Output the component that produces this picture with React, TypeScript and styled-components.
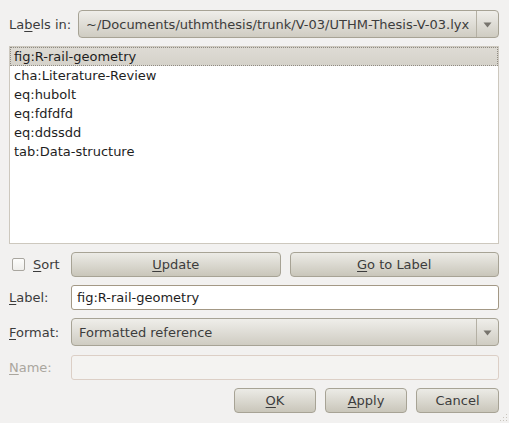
import React from "react";
import styled, { createGlobalStyle } from "styled-components";

const Global = createGlobalStyle`
  html, body { margin: 0; padding: 0; background: #f2f1f0; }
  body { font-family: "DejaVu Sans", "Liberation Sans", sans-serif; font-size: 13px; color: #3c3c3c; }
  * { box-sizing: border-box; }
`;

const Dialog = styled.div`
  position: relative;
  width: 509px;
  height: 423px;
  padding: 10px 10px 0 9px;
  display: flex;
  flex-direction: column;
  background: #f2f1f0;
`;

const Row = styled.div<{ $h: number; $mt?: number }>`
  display: flex;
  align-items: center;
  height: ${(p) => p.$h}px;
  margin-top: ${(p) => p.$mt ?? 0}px;
`;

const FieldLabel = styled.span<{ $w: number; $disabled?: boolean }>`
  flex: 0 0 ${(p) => p.$w}px;
  color: ${(p) => (p.$disabled ? "#aaa69e" : "#3c3c3c")};
  white-space: nowrap;
`;

const U = styled.span`
  text-decoration: underline;
  text-underline-offset: 2px;
`;

const Combo = styled.div`
  flex: 1;
  height: 28px;
  display: flex;
  border: 1px solid #a7a395;
  border-radius: 4px;
  background: linear-gradient(#efeeea, #cfccc2);
  overflow: hidden;
`;

const ComboText = styled.div`
  flex: 1;
  padding-left: 7px;
  display: flex;
  align-items: center;
  color: #3c3c3c;
  white-space: nowrap;
  overflow: hidden;
`;

const ComboArrow = styled.div`
  flex: 0 0 22px;
  border-left: 1px solid #b4b0a4;
  display: flex;
  align-items: center;
  justify-content: center;
  padding-top: 1px;
`;

const List = styled.div`
  margin-top: 8px;
  height: 198px;
  background: #ffffff;
  border: 1px solid #cdc8be;
  display: flex;
  flex-direction: column;
`;

const ListItem = styled.div<{ $sel?: boolean }>`
  height: 19px;
  line-height: 17px;
  padding-left: 3px;
  color: #1e1e1e;
  white-space: nowrap;
  border: 1px ${(p) => (p.$sel ? "dotted #8e8a82" : "solid transparent")};
  background: ${(p) => (p.$sel ? "linear-gradient(#dedbd4, #d5d2ca)" : "transparent")};
`;

const CheckWrap = styled.label`
  flex: 0 0 62px;
  display: flex;
  align-items: center;
  padding-left: 3px;
  gap: 8px;
`;

const Check = styled.span`
  width: 13px;
  height: 13px;
  border: 1px solid #a9a69f;
  border-radius: 2px;
  background: linear-gradient(#fdfdfc, #efeeeb);
`;

const Button = styled.button<{ $w?: number; $flex?: boolean }>`
  height: 25px;
  ${(p) => (p.$flex ? "flex: 1;" : `flex: 0 0 ${p.$w}px;`)}
  border: 1px solid #a7a395;
  border-radius: 4px;
  background: linear-gradient(#ecebe6, #c9c6ba);
  font-family: "DejaVu Sans", "Liberation Sans", sans-serif;
  font-size: 13px;
  color: #3c3c3c;
  padding: 0;
`;

const Input = styled.div<{ $disabled?: boolean }>`
  flex: 1;
  height: 25px;
  border: 1px solid ${(p) => (p.$disabled ? "#dccfc6" : "#a39885")};
  border-radius: 3px;
  background: ${(p) => (p.$disabled ? "#f4f3f1" : "#ffffff")};
  display: flex;
  align-items: center;
  padding-left: 5px;
  color: #1e1e1e;
`;

const Gap = styled.div<{ $w: number }>`
  flex: 0 0 ${(p) => p.$w}px;
`;

const ButtonBar = styled.div`
  margin-top: 8px;
  height: 25px;
  display: flex;
  justify-content: flex-end;
  gap: 9px;
`;

const Grip = styled.svg`
  position: absolute;
  right: 1px;
  bottom: 1px;
`;

const Arrow = () => (
  <svg width="9" height="6" viewBox="0 0 9 6">
    <path d="M0.5 0.5 H8.5 L4.5 5.5 Z" fill="#77746d" />
  </svg>
);

const items = [
  "fig:R-rail-geometry",
  "cha:Literature-Review",
  "eq:hubolt",
  "eq:fdfdfd",
  "eq:ddssdd",
  "tab:Data-structure",
];

export default function App() {
  return (
    <>
      <Global />
      <Dialog>
        <Row $h={28}>
          <FieldLabel $w={69}>
            La<U>b</U>els in:
          </FieldLabel>
          <Combo>
            <ComboText>~/Documents/uthmthesis/trunk/V-03/UTHM-Thesis-V-03.lyx</ComboText>
            <ComboArrow>
              <Arrow />
            </ComboArrow>
          </Combo>
        </Row>
        <List>
          {items.map((t, i) => (
            <ListItem key={t} $sel={i === 0}>
              {t}
            </ListItem>
          ))}
        </List>
        <Row $h={25} $mt={8}>
          <CheckWrap>
            <Check />
            <span>
              <U>S</U>ort
            </span>
          </CheckWrap>
          <Button $flex>
            <U>U</U>pdate
          </Button>
          <Gap $w={9} />
          <Button $flex>
            <U>G</U>o to Label
          </Button>
        </Row>
        <Row $h={25} $mt={8}>
          <FieldLabel $w={62}>
            <U>L</U>abel:
          </FieldLabel>
          <Input>fig:R-rail-geometry</Input>
        </Row>
        <Row $h={28} $mt={8}>
          <FieldLabel $w={62}>
            <U>F</U>ormat:
          </FieldLabel>
          <Combo>
            <ComboText>Formatted reference</ComboText>
            <ComboArrow>
              <Arrow />
            </ComboArrow>
          </Combo>
        </Row>
        <Row $h={25} $mt={9}>
          <FieldLabel $w={62} $disabled>
            <U>N</U>ame:
          </FieldLabel>
          <Input $disabled />
        </Row>
        <ButtonBar>
          <Button $w={82}>
            <U>O</U>K
          </Button>
          <Button $w={82}>
            <U>A</U>pply
          </Button>
          <Button $w={83}>Cancel</Button>
        </ButtonBar>
        <Grip width="10" height="10" viewBox="0 0 10 10">
          {[
            [8, 2],
            [5, 5],
            [8, 5],
            [2, 8],
            [5, 8],
            [8, 8],
          ].map(([x, y]) => (
            <rect key={`${x}-${y}`} x={x} y={y} width="1" height="1" fill="#c9c5bd" />
          ))}
        </Grip>
      </Dialog>
    </>
  );
}
